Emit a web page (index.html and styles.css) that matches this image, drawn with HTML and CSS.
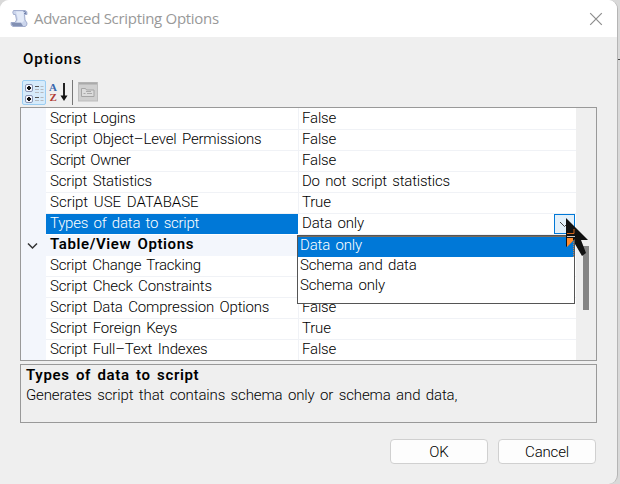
FILE: index.html
```html
<!DOCTYPE html>
<html lang="en">
<head>
<meta charset="utf-8">
<title>Advanced Scripting Options</title>
<link rel="stylesheet" href="styles.css">
</head>
<body>
<div class="backdrop">
<main class="dialog">
  <header class="titlebar">
    <svg class="app-icon" width="19" height="19" viewBox="0 0 19 19">
      <path d="M3.500 1.500H15q2.500.3 2 4H14.500L15 11l2 3q.3 3-2 3.500H3q-2.500-.5-2-4h4l1.500-2.500L5.500 5.500H3.500Q2 3 3.500 1.500Z" fill="#cbd5ec" stroke="#a3aece"/>
      <path d="M6 2.500h7.500l.5 9-1.500 2H6.500l1.500-3Z" fill="#e3eaf8"/>
      <path d="M1.500 13.700h9.500l2 3.300H3q-1.700-1-1.500-3.300Z" fill="#8290b3"/>
      <path d="M13.500 2.500q2.500-.5 2.500 2h-2" fill="none" stroke="#7585ad"/>
    </svg>
    <h1 class="title">Advanced Scripting Options</h1>
    <svg class="close" width="14" height="14" viewBox="0 0 14 14"><path d="M1.200 1.200 12.800 12.800M12.800 1.200 1.200 12.800" stroke="#8d8d8d" stroke-width="1.200"/></svg>
  </header>

  <h2 class="heading">Options</h2>

  <div class="toolbar">
    <span class="tool tool-on">
      <svg width="22" height="23" viewBox="0 0 22 23">
        <g fill="#f3f5fb" stroke="#8793b3"><rect x="2.500" y="3.500" width="7" height="7" rx="1.500"/><rect x="2.500" y="14.500" width="7" height="7" rx="1.500"/></g>
        <path d="M4 7h4M6 5v4M4 18h4M6 16v4" stroke="#111" stroke-width="2"/>
        <path d="M12 5.500h4M12 16.500h4" stroke="#555"/>
        <path d="M12 8.500h4M12 11.500h4M12 19.500h4M17.500 5.500h3M17.500 8.500h3M17.500 11.500h3M17.500 16.500h3M17.500 19.500h3" stroke="#b5b9bf"/>
      </svg>
    </span>
    <svg class="sort" width="19" height="22" viewBox="0 0 19 22">
      <text class="sort-a" x="0" y="9.500">A</text><text class="sort-z" x="0.500" y="20">Z</text>
      <path d="M15 2v14" stroke="#222" stroke-width="2"/><path d="M11.500 14.500h7L15 20Z" fill="#111"/>
    </svg>
    <span class="divider"></span>
    <svg class="pages" width="20" height="20" viewBox="0 0 20 20">
      <rect x=".5" y=".5" width="19" height="18.500" fill="#cfcfcf" stroke="#bdbdbd"/>
      <path d="M1 1.500h18" stroke="#aaa" stroke-width="2"/>
      <path d="M3.500 14.500v-8h4l1 1.500h7.500v6.500Z" fill="#dcdcdc" stroke="#a5a5a5"/>
      <path d="M5.500 11.500h2M9 11.500h5M8 9.500h5" stroke="#aaa"/>
    </svg>
  </div>

  <section class="grid">
    <div class="rows">
      <div class="row first"><span class="name">Script Logins</span><span class="value">False</span></div>
      <div class="row"><span class="name">Script Object–Level Permissions</span><span class="value">False</span></div>
      <div class="row"><span class="name narrow">Script Owner</span><span class="value">False</span></div>
      <div class="row"><span class="name">Script Statistics</span><span class="value">Do not script statistics</span></div>
      <div class="row"><span class="name caps">Script USE DATABASE</span><span class="value">True</span></div>
      <div class="row selected"><span class="name">Types of data to script</span><span class="value">Data only</span>
        <span class="drop"><svg width="19" height="18" viewBox="0 0 19 18"><path d="m5 7 4.500 4.500L14 7" fill="none" stroke="#444"/></svg></span></div>
      <div class="row category"><svg class="chevron" width="11" height="8" viewBox="0 0 11 8"><path d="m1 1.500 4.500 4.500L10 1.500" fill="none" stroke="#333" stroke-width="1.500"/></svg><span class="name">Table/View Options</span></div>
      <div class="row"><span class="name">Script Change Tracking</span><span class="value"></span></div>
      <div class="row"><span class="name">Script Check Constraints</span><span class="value"></span></div>
      <div class="row"><span class="name">Script Data Compression Options</span><span class="value">False</span></div>
      <div class="row"><span class="name">Script Foreign Keys</span><span class="value">True</span></div>
      <div class="row"><span class="name">Script Full–Text Indexes</span><span class="value">False</span></div>
    </div>
    <div class="scrollbar"><div class="thumb"></div></div>
    <ul class="menu">
      <li class="active">Data only</li><li>Schema and data</li><li>Schema only</li>
    </ul>
    <svg class="cursor" width="24" height="40" viewBox="0 0 24 40">
      <path d="M0 0 22 22h-7l5 13-4 3-7-12v-5L0 29Z" fill="#111"/>
      <path d="M1 20h6v3l-6 6Z" fill="#ff8a2b"/>
      <path d="M1 18.500h8" stroke="#c8c8c8"/>
      <path d="M1 15.500h7V11" fill="none" stroke="#d8691e"/>
    </svg>
  </section>

  <section class="help">
    <h3 class="help-title">Types of data to script</h3>
    <p class="help-text">Generates script that contains schema only or schema and data,</p>
  </section>

  <footer class="actions"><button class="button">OK</button><button class="button">Cancel</button></footer>
</main>
<div class="outside"></div>
</div>
</body>
</html>
```
FILE: styles.css
```css
* { box-sizing: border-box; }
body { margin: 0; font: 300 15px/20px Roboto, "Liberation Sans", sans-serif; color: #000; letter-spacing: -.17px; word-spacing: 2px; }
h1, h2, h3, p, ul { margin: 0; padding: 0; font: inherit; }
.backdrop { display: flex; width: 620px; height: 484px; background: #d9d9d9; }
.dialog { width: 618px; height: 484px; background: #efefef; border-right: 1px solid #b5b5b5; border-radius: 9px 9px 9px 0; overflow: hidden; }
.outside { width: 2px; height: 60px; border-bottom: 1px solid #444; }
.titlebar { display: flex; align-items: center; height: 37px; padding: 0 14px 0 10px; background: #fff; }
.title { margin: -2px 0 0 5px; font: 400 15px/20px "Open Sans", "Noto Sans", sans-serif; letter-spacing: -.3px; word-spacing: 0; color: #999; }
.close { margin-left: auto; }
.heading { margin: 12px 0 0 23px; height: 20px; font-weight: 500; letter-spacing: .95px; }
.toolbar { display: flex; align-items: center; height: 26px; margin: 10px 0 2px 22px; }
.tool { width: 24px; height: 25px; border: 1px solid #9bcdf2; border-radius: 2px; background: #d6ebfb; }
.tool svg, .pages, .sort { display: block; }
.sort { margin-left: 3px; }
.sort text { font: bold 11px "Liberation Serif", serif; letter-spacing: 0; }
.sort-a { fill: #3867ae; }
.sort-z { fill: #b13b35; }
.divider { width: 1px; height: 25px; margin: 0 5px 0 4px; background: #777; }
.grid { position: relative; display: flex; width: 577px; height: 254px; margin-left: 20px; border: 1px solid #999; background: #efefef; }
.rows { width: 555px; height: 252px; overflow: hidden; background: #fff; }
.row { position: relative; display: flex; height: 21px; border-left: 25px solid #f3f6fc; line-height: 19px; }
.row.first { height: 22px; line-height: 20px; }
.name { width: 253px; padding-left: 4px; border-right: 1px solid #f0f2f6; border-bottom: 1px solid #f0f2f6; white-space: nowrap; }
.narrow { letter-spacing: -.5px; }
.caps { letter-spacing: 0; }
.value { flex: 1; padding-left: 3px; border-bottom: 1px solid #f0f2f6; }
.row:nth-child(4) .value, .selected .name, .row:nth-child(8) .name { letter-spacing: -.23px; }
.selected .name { background: #0078d7; color: #fff; border-color: #fff; }
.category { background: #f3f6fc; font-weight: 600; letter-spacing: .6px; }
.category .name { border: 0; }
.chevron { position: absolute; left: -19px; top: 7px; }
.drop { position: absolute; right: 1px; top: 0; width: 21px; height: 20px; border: 1px solid #0078d7; background: #e3f0fa; }
.drop svg { display: block; }
.scrollbar { width: 20px; padding: 138px 0 0 7px; }
.thumb { width: 6px; height: 64px; background: #858585; }
.menu { position: absolute; left: 276px; top: 127px; width: 278px; height: 69px; border: 1px solid #555; background: #fff; list-style: none; }
.menu li { height: 20px; padding-left: 2px; line-height: 17px; }
.menu .active { height: 21px; line-height: 19px; background: #0078d7; color: #fff; border-right: 1px dotted #c98045; box-shadow: inset 0 1px #786b5c; }
.cursor { position: absolute; left: 545px; top: 110px; }
.help { width: 577px; height: 59px; margin: 3px 0 0 20px; padding: 0 5px; border: 1px solid #999; }
.help-title { font-weight: 600; letter-spacing: .65px; }
.help-text { letter-spacing: -.14px; }
.actions { display: flex; gap: 10px; margin: 16px 0 0 390px; }
.button { width: 98px; height: 25px; padding: 0; border: 1px solid #d0d0d0; border-radius: 4px; background: #fdfdfd; color: #000; font: inherit; letter-spacing: inherit; }
```
